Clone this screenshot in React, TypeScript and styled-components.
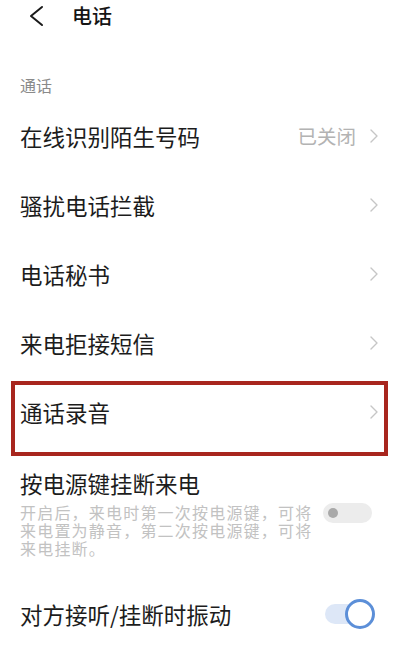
import React from "react";
import styled, { createGlobalStyle } from "styled-components";

const GlobalStyle = createGlobalStyle`
  html, body {
    margin: 0;
    padding: 0;
    background: #ffffff;
  }
  body {
    font-family: "Noto Sans CJK SC", "Noto Sans", sans-serif;
    color: #1c1c1c;
  }
`;

const Page = styled.div`
  width: 400px;
  min-height: 663px;
  background: #ffffff;
  overflow: hidden;
`;

const Header = styled.div`
  height: 32px;
  display: flex;
  align-items: center;
  padding-left: 28px;
  gap: 28px;
`;

const Title = styled.div`
  font-size: 20px;
  font-weight: 500;
  line-height: 32px;
  color: #151515;
`;

const SectionLabel = styled.div`
  margin: 43px 0 6px 20px;
  font-size: 16px;
  line-height: 20px;
  color: #8a8a8a;
`;

const Row = styled.div<{ $marked?: boolean }>`
  position: relative;
  height: 69px;
  display: flex;
  align-items: center;
  justify-content: space-between;
  padding: 0 22px 0 20px;

  ${(p) =>
    p.$marked &&
    `
    &::after {
      content: "";
      position: absolute;
      left: 11px;
      right: 12px;
      top: 4px;
      bottom: -10px;
      border: 4px solid #a8261e;
      pointer-events: none;
    }
  `}
`;

const Label = styled.span`
  font-size: 22.5px;
  line-height: 30px;
  color: #1c1c1c;
`;

const Trail = styled.div`
  display: flex;
  align-items: center;
  gap: 14px;
`;

const Value = styled.span`
  font-size: 19.5px;
  line-height: 26px;
  color: #b3b3b3;
`;

const Block = styled.div`
  padding: 22px 22px 22px 20px;
  display: flex;
  flex-direction: column;
  gap: 5px;
`;

const BlockBody = styled.div`
  display: flex;
  justify-content: space-between;
  align-items: flex-start;
`;

const Hint = styled.p`
  margin: 0;
  max-width: 300px;
  font-size: 16px;
  line-height: 18px;
  letter-spacing: 1.2px;
  color: #c2c2c2;
`;

const Track = styled.div<{ $on?: boolean }>`
  position: relative;
  width: ${(p) => (p.$on ? "36px" : "49px")};
  height: 20px;
  border-radius: 10px;
  background: ${(p) => (p.$on ? "#dde7f7" : "#ececec")};
  margin-right: ${(p) => (p.$on ? "17px" : "6px")};
`;

const Knob = styled.span<{ $on?: boolean }>`
  position: absolute;
  top: 50%;
  border-radius: 50%;
  transform: translateY(-50%);
  ${(p) =>
    p.$on
      ? `
    left: 20px;
    width: 24px;
    height: 24px;
    background: #ffffff;
    border: 3px solid #5c8fd8;
  `
      : `
    left: 5px;
    width: 10px;
    height: 10px;
    background: #a9a9a9;
  `}
`;

function Chevron() {
  return (
    <svg width="8" height="14" viewBox="0 0 8 14" fill="none">
      <path d="M1 1 L7 7 L1 13" stroke="#c6c6c6" strokeWidth="1.4" strokeLinecap="round" strokeLinejoin="round" />
    </svg>
  );
}

function BackArrow() {
  return (
    <svg width="16" height="22" viewBox="0 0 16 22" fill="none">
      <path d="M14 2 L3 11 L14 20" stroke="#1a1a1a" strokeWidth="2" strokeLinecap="round" strokeLinejoin="round" />
    </svg>
  );
}

const links = [
  { label: "在线识别陌生号码", value: "已关闭" },
  { label: "骚扰电话拦截" },
  { label: "电话秘书" },
  { label: "来电拒接短信" },
  { label: "通话录音", marked: true },
];

export default function App() {
  return (
    <Page>
      <GlobalStyle />
      <Header>
        <BackArrow />
        <Title>电话</Title>
      </Header>

      <SectionLabel>通话</SectionLabel>

      {links.map((item) => (
        <Row key={item.label} $marked={item.marked}>
          <Label>{item.label}</Label>
          <Trail>
            {item.value && <Value>{item.value}</Value>}
            <Chevron />
          </Trail>
        </Row>
      ))}

      <Block>
        <Label>按电源键挂断来电</Label>
        <BlockBody>
          <Hint>开启后，来电时第一次按电源键，可将来电置为静音，第二次按电源键，可将来电挂断。</Hint>
          <Track>
            <Knob />
          </Track>
        </BlockBody>
      </Block>

      <Row>
        <Label>对方接听/挂断时振动</Label>
        <Track $on>
          <Knob $on />
        </Track>
      </Row>
    </Page>
  );
}
